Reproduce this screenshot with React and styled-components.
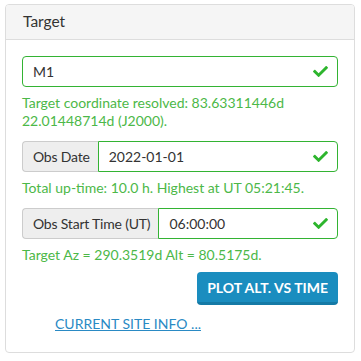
import React from "react";
import styled, { createGlobalStyle } from "styled-components";

const GlobalStyle = createGlobalStyle`
  body {
    margin: 0;
    background: #fff;
    font-family: "Source Sans Pro", Lato, "Liberation Sans", sans-serif;
  }
`;

const Check = () => (
  <CheckIcon viewBox="0 0 512 512">
    <path d="M173.9 439.4L7.5 273c-10-10-10-26.2 0-36.2l36.2-36.2c10-10 26.2-10 36.2 0L192 312.7 432.1 72.6c10-10 26.2-10 36.2 0l36.2 36.2c10 10 10 26.2 0 36.2L210.1 439.4c-10 10-26.2 10-36.2 0z" />
  </CheckIcon>
);

const App = () => {
  return (
    <Page>
      <GlobalStyle />
      <Card>
        <Header>Target</Header>
        <Body>
          <Field>
            <Input value="M1" readOnly />
            <Check />
          </Field>
          <Help>
            Target coordinate resolved: 83.63311446d
            <br />
            22.01448714d (J2000).
          </Help>
          <Group>
            <Addon>Obs Date</Addon>
            <Field>
              <Input value="2022-01-01" readOnly $joined />
              <Check />
            </Field>
          </Group>
          <Help>Total up-time: 10.0 h. Highest at UT 05:21:45.</Help>
          <Group>
            <Addon>Obs Start Time (UT)</Addon>
            <Field>
              <Input value="06:00:00" readOnly $joined />
              <Check />
            </Field>
          </Group>
          <Help>Target Az = 290.3519d Alt = 80.5175d.</Help>
          <Actions>
            <Button>Plot Alt. vs Time</Button>
          </Actions>
          <SiteLink href="#">Current Site Info ...</SiteLink>
        </Body>
      </Card>
    </Page>
  );
};

export default App;

const Page = styled.div`
  padding: 4px 6px 0 5px;
  width: 350px;
`;

const Card = styled.div`
  border: 1px solid #ddd;
  border-radius: 4px;
  height: 349px;
  box-sizing: border-box;
  background: #fff;
`;

const Header = styled.div`
  height: 35px;
  box-sizing: border-box;
  background: #f5f5f5;
  border-bottom: 1px solid #ddd;
  border-radius: 3px 3px 0 0;
  padding: 7px 17px 0;
  font-size: 15.5px;
  color: #333;
`;

const Body = styled.div`
  padding: 16px 16px 0;
`;

const Group = styled.div`
  display: flex;
  height: 31px;
  margin-top: 11px;
`;

const Addon = styled.div`
  display: flex;
  align-items: center;
  padding: 0 8px 0 10px;
  background: #eee;
  border: 1px solid #ccc;
  border-right: none;
  border-radius: 4px 0 0 4px;
  font-size: 14px;
  letter-spacing: -0.2px;
  color: #333;
  white-space: nowrap;
`;

const Field = styled.div`
  position: relative;
  flex: 1;
  min-width: 0;
  display: flex;
  height: 31px;
`;

const Input = styled.input`
  flex: 1;
  min-width: 0;
  height: 31px;
  box-sizing: border-box;
  border: 1px solid #33b333;
  border-radius: ${(p) => (p.$joined ? "0 4px 4px 0" : "4px")};
  padding: 0 10px;
  font-family: inherit;
  font-size: 14px;
  color: #333;
  outline: none;
`;

const CheckIcon = styled.svg`
  position: absolute;
  right: 9px;
  top: 8px;
  width: 17px;
  height: 15px;
  fill: #2db52d;
`;

const Help = styled.div`
  margin-top: 7px;
  font-size: 14px;
  line-height: 18px;
  color: #4cb848;
`;

const Actions = styled.div`
  display: flex;
  justify-content: flex-end;
  margin-top: 8px;
`;

const Button = styled.button`
  height: 33px;
  padding: 0 10px;
  background: #1a8dbf;
  border: none;
  border-bottom: 3px solid #157aa6;
  border-radius: 4px;
  color: #fff;
  font-family: inherit;
  font-weight: bold;
  font-size: 14px;
  text-transform: uppercase;
`;

const SiteLink = styled.a`
  display: inline-block;
  margin: 10px 0 0 33px;
  font-size: 14px;
  color: #2a8ac4;
  text-transform: uppercase;
  text-decoration: underline;
`;
